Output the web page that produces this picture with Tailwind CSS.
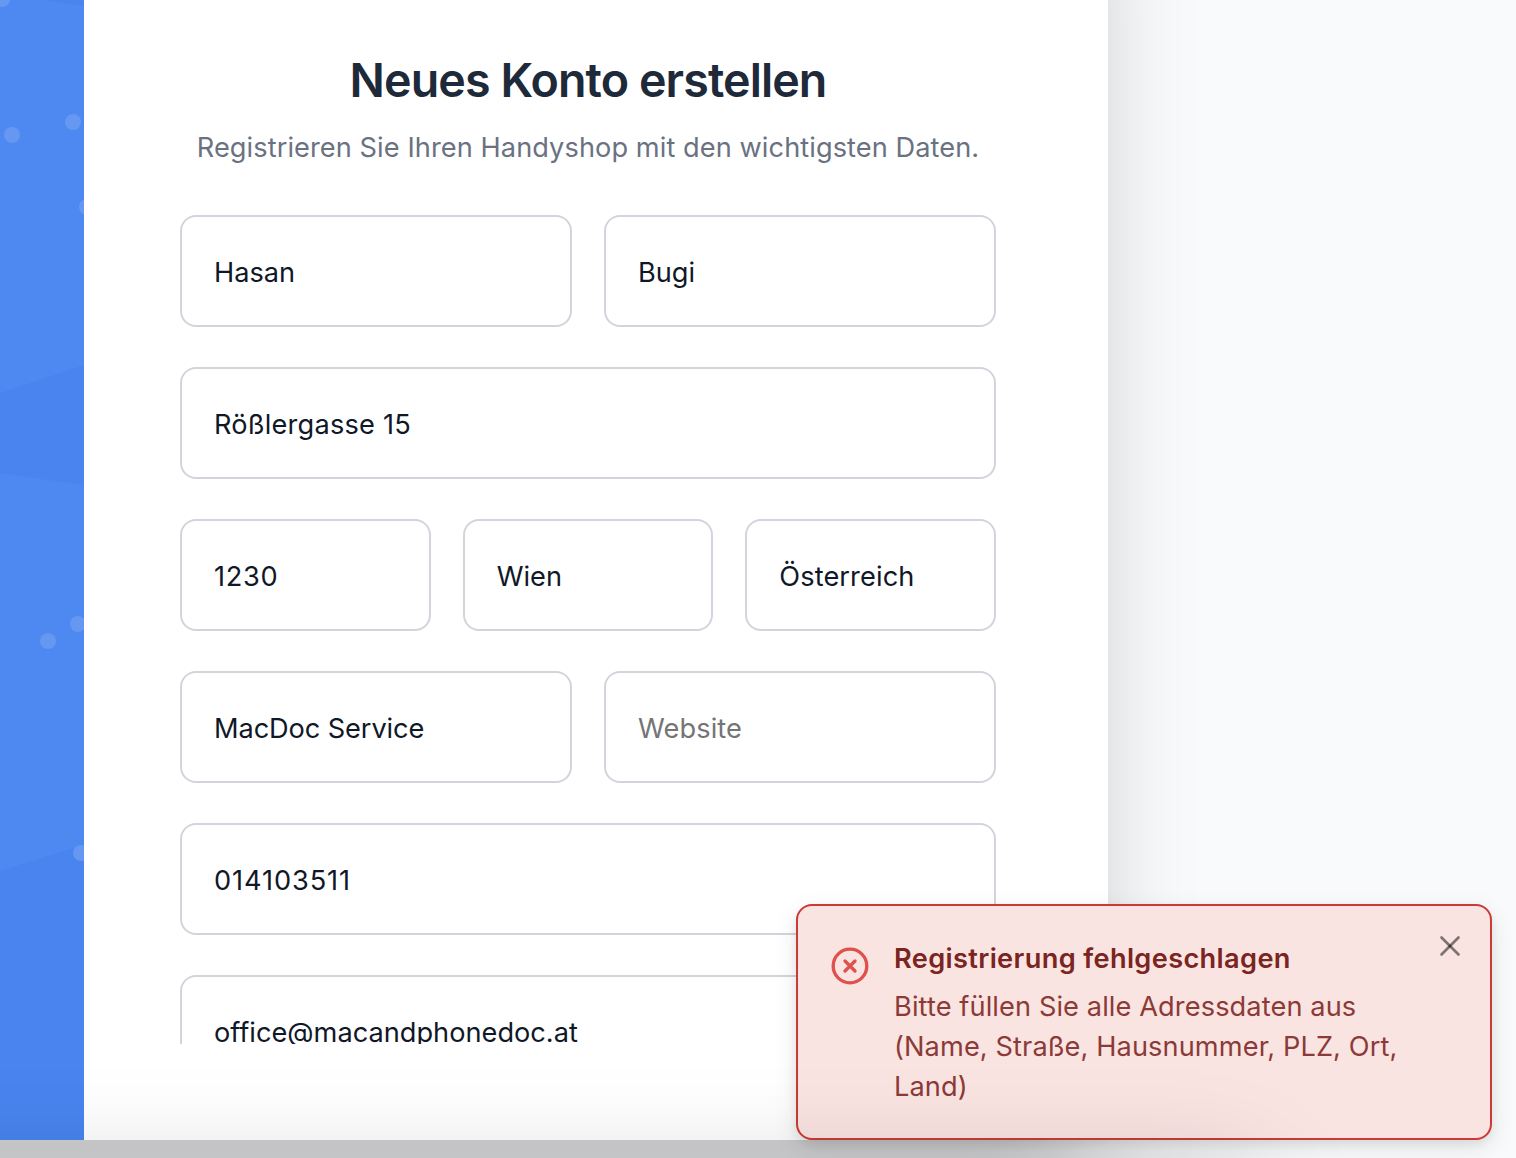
<!DOCTYPE html>
<html lang="de">
<head>
<meta charset="utf-8">
<title>Neues Konto erstellen</title>
<script src="https://cdn.jsdelivr.net/npm/@tailwindcss/browser@4"></script>
</head>
<body class="font-['Inter',sans-serif] text-[27.2px] leading-10 text-gray-900">
<div class="relative flex h-[1158px] w-[1516px] items-start overflow-hidden bg-[#f9fafc]">
<main class="-mt-40 -ml-80 flex h-[1300px] w-[1428px] shrink-0 pt-40 pl-80 shadow-[0_50px_100px_-24px_rgba(0,0,0,0.25)]">
  <aside class="w-[84px] shrink-0 bg-[#4984ef]">
    <svg class="block h-[1140px] w-[84px]" viewBox="0 0 84 1140">
      <path fill="#4e88f1" d="M0 0H44L84 6V365L0 393ZM0 473L84 485V845L0 871Z"/>
      <g fill="#6698f1"><circle cx="2" cy="-1" r="8"/><circle cx="73" cy="122" r="8"/><circle cx="12" cy="135" r="8"/><circle cx="87" cy="207" r="8"/><circle cx="78" cy="624" r="8"/><circle cx="48" cy="641" r="8"/><circle cx="81" cy="853" r="8"/></g>
    </svg>
  </aside>
  <section class="h-[1140px] flex-1 bg-white px-24 pt-12 pr-28 pb-24">
    <div class="flex h-[996px] flex-col overflow-hidden">
      <h1 class="text-center text-[46.6px] leading-16 font-semibold whitespace-nowrap tracking-[-0.9px] text-gray-800">Neues Konto erstellen</h1>
      <p class="mt-4 text-center tracking-[0.07px] whitespace-nowrap text-gray-500">Registrieren Sie Ihren Handyshop mit den wichtigsten Daten.</p>
      <form class="mt-[47px] flex flex-col gap-10">
        <div class="grid grid-cols-2 gap-8">
          <div class="flex h-28 items-center rounded-2xl border-2 border-gray-300 px-8 pt-[3px]"><span>Hasan</span></div>
          <div class="flex h-28 items-center rounded-2xl border-2 border-gray-300 px-8 pt-[3px]"><span>Bugi</span></div>
        </div>
        <div class="flex h-28 items-center rounded-2xl border-2 border-gray-300 px-8 pt-[3px]"><span class="tracking-[0.2px]">Rößlergasse 15</span></div>
        <div class="grid grid-cols-3 gap-8">
          <div class="flex h-28 items-center rounded-2xl border-2 border-gray-300 px-8 pt-[3px]"><span class="tracking-[0.7px]">1230</span></div>
          <div class="flex h-28 items-center rounded-2xl border-2 border-gray-300 px-8 pt-[3px]"><span>Wien</span></div>
          <div class="flex h-28 items-center rounded-2xl border-2 border-gray-300 px-8 pt-[3px]"><span class="tracking-[0.1px]">Österreich</span></div>
        </div>
        <div class="grid grid-cols-2 gap-8">
          <div class="flex h-28 items-center rounded-2xl border-2 border-gray-300 px-8 pt-[3px]"><span class="tracking-[-0.1px]">MacDoc Service</span></div>
          <div class="flex h-28 items-center rounded-2xl border-2 border-gray-300 px-8 pt-[3px] text-[#757575]"><span class="tracking-[0.1px]">Website</span></div>
        </div>
        <div class="flex h-28 items-center rounded-2xl border-2 border-gray-300 px-8 pt-[3px]"><span class="tracking-[0.9px]">014103511</span></div>
        <div class="flex h-28 items-center rounded-2xl border-2 border-gray-300 px-8 pt-[3px]"><span>office@macandphonedoc.at</span></div>
      </form>
    </div>
  </section>
</main>

<div role="alert" class="absolute top-[904px] left-[796px] flex h-[236px] w-[696px] rounded-2xl border-2 border-[#cb3a34] bg-[#fae4e2] pt-8 pl-8 shadow-[0_8px_24px_rgba(0,0,0,0.1),0_4px_8px_rgba(0,0,0,0.06)]">
  <svg class="mt-2 size-10 shrink-0" viewBox="0 0 20 20" fill="none" stroke="#df514c" stroke-width="1.67" stroke-linecap="round"><circle cx="10" cy="10" r="8.4"/><path d="m12.5 7.5-5 5m0-5 5 5"/></svg>
  <div class="ml-6 w-[520px] pt-px">
    <h2 class="font-semibold tracking-[0.35px] whitespace-nowrap text-[#7a2522]">Registrierung fehlgeschlagen</h2>
    <p class="mt-2 tracking-[0.1px] whitespace-nowrap text-[#8b3a37]">Bitte füllen Sie alle Adressdaten aus<br>(Name, Straße, Hausnummer, PLZ, Ort,<br>Land)</p>
  </div>
  <svg class="-mt-2 ml-5 size-8 shrink-0" viewBox="0 0 32 32" fill="none" stroke="#000" stroke-opacity=".5" stroke-width="2.6" stroke-linecap="round"><path d="M7.5 7.5 24.5 24.5"/><path d="M24.5 7.5 7.5 24.5"/></svg>
</div>

<!-- soft shade cast by the section below the fold -->
<div class="pointer-events-none absolute top-[1184px] -left-40 h-[600px] w-[1410px] shadow-[0_0_100px_rgba(0,0,0,0.25)]"></div>
</div>
</body>
</html>
